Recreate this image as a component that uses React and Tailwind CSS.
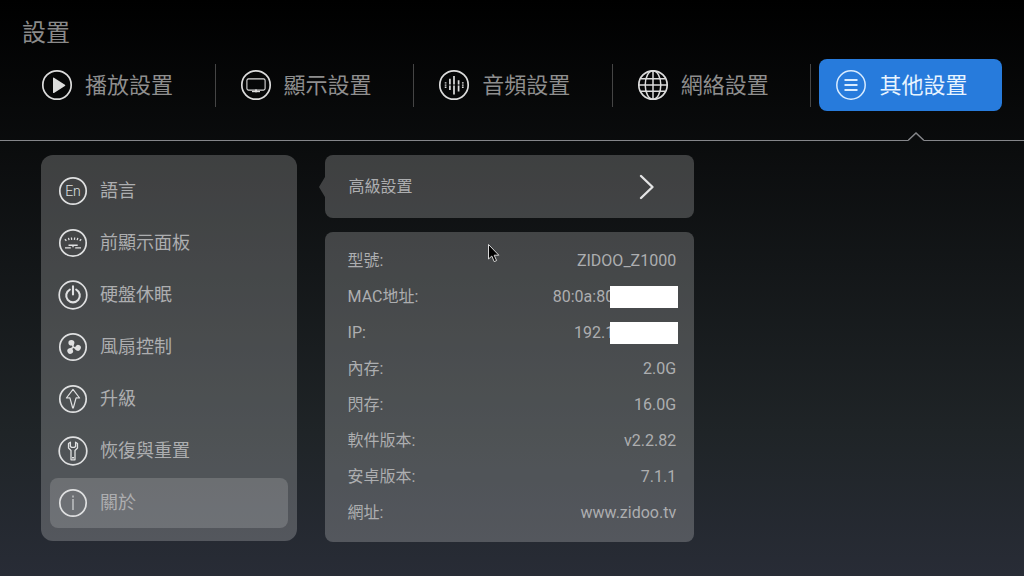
import React, { useState } from "react";

const ring = { fill: "none", stroke: "currentColor", strokeWidth: 1.7 };

const PlayIcon = () => (
  <svg className="size-8 shrink-0" viewBox="0 0 32 32">
    <circle cx="16" cy="16" r="14.2" {...ring} />
    <path d="M12 9.2v14.2c0 .6.5.8 1 .5l10.9-7c.5-.3.5-.8 0-1.2l-10.9-7c-.5-.3-1-.1-1 .5z" fill="currentColor" />
  </svg>
);

const ScreenIcon = () => (
  <svg className="size-8 shrink-0" viewBox="0 0 32 32">
    <circle cx="16" cy="16" r="14.2" {...ring} />
    <rect x="6.9" y="9.9" width="18.2" height="11.2" rx="1.6" {...ring} strokeWidth="1.1" />
    <path d="M12 22.6h8" {...ring} strokeWidth="1.2" />
    <path d="M15 20.6h2v2.6h-2z" fill="currentColor" />
  </svg>
);

const AudioIcon = () => (
  <svg className="size-8 shrink-0" viewBox="0 0 32 32">
    <circle cx="16" cy="16" r="14.2" {...ring} />
    <path d="M16 7v8.6M16 16.4v9M11.9 9.7v5.9M11.9 16.4v4.6M20.6 11.3v4.3M20.6 16.4v6.2" {...ring} />
    <path d="M7.6 13.2v1.4M7.6 15.4v1.4M7.6 17.6v1.4M24.8 13.2v1.4M24.8 15.4v1.4M24.8 17.6v1.4" {...ring} />
  </svg>
);

const GlobeIcon = () => (
  <svg className="size-8 shrink-0" viewBox="0 0 32 32">
    <circle cx="16" cy="16" r="14.2" {...ring} />
    <ellipse cx="16" cy="16" rx="7.8" ry="14.2" {...ring} strokeWidth="1.5" />
    <path d="M16 2v28M2 16h28M4 9.8h24M4 22.2h24" {...ring} strokeWidth="1.5" />
  </svg>
);

const ListIcon = () => (
  <svg className="size-8 shrink-0" viewBox="0 0 32 32">
    <circle cx="16" cy="16" r="14.2" {...ring} strokeWidth="1.5" />
    <path d="M9.5 11h13M9.5 16h13M9.5 21h13" {...ring} strokeWidth="2.2" />
  </svg>
);

const LanguageIcon = () => (
  <svg className="size-[30px] shrink-0" viewBox="0 0 30 30">
    <circle cx="15" cy="15" r="13.2" {...ring} />
    <text x="15" y="20" textAnchor="middle" fontSize="14" fontWeight="300" fill="currentColor">
      En
    </text>
  </svg>
);

const PanelIcon = () => (
  <svg className="size-[30px] shrink-0" viewBox="0 0 30 30">
    <circle cx="15" cy="15" r="13.2" {...ring} />
    <path d="M6.9 11.2l1.5 1.6M10.4 9.9l.7 2.2M13.4 9.5l.3 2.4M16.7 9.5l-.3 2.4M19.9 9.9l-.8 2.2M23.2 11.2l-1.5 1.6" {...ring} strokeWidth="1.3" />
    <path d="M10.5 17.3h9.2M15 17.3v2M7 19.9h5.8M17.2 19.9H23" {...ring} strokeWidth="1.4" />
  </svg>
);

const PowerIcon = () => (
  <svg className="size-[30px] shrink-0" viewBox="0 0 30 30">
    <circle cx="15" cy="15" r="13.8" {...ring} />
    <path d="M11.8 9.6a6.8 6.8 0 1 0 6.4 0M15 6.4v8" {...ring} strokeWidth="2.1" strokeLinecap="round" />
  </svg>
);

const FanIcon = () => (
  <svg className="size-[30px] shrink-0" viewBox="0 0 30 30">
    <circle cx="15" cy="15" r="13.2" {...ring} />
    <g fill="currentColor">
      {[0, 120, 240].map((angle) => (
        <g key={angle} transform={`rotate(${angle} 15.2 15.2)`}>
          <ellipse cx="13.4" cy="10.7" rx="3" ry="2.8" />
          <path d="M15.9 11.5l-.3 3.7h-.8l-1.300-2.500z" />
        </g>
      ))}
      <circle cx="15.2" cy="15.2" r="1" />
    </g>
  </svg>
);

const UpgradeIcon = () => (
  <svg className="size-[30px] shrink-0" viewBox="0 0 30 30">
    <circle cx="15" cy="15" r="13.2" {...ring} />
    <path d="M15 5.4l6.6 8.6-3.5-.2L15.3 24h-.6l-2.8-10.2-3.5.2z" {...ring} strokeWidth="1.2" strokeLinejoin="round" />
  </svg>
);

const WrenchIcon = () => (
  <svg className="size-[30px] shrink-0" viewBox="0 0 30 30">
    <circle cx="15" cy="15" r="13.8" {...ring} />
    <path d="M12.4 6.2l-1.9 1.3v4.5l2.5 2.5v9.3h4v-9.3l2.5-2.5V7.5l-1.9-1.3v4.3l-1.3.9h-2.6l-1.3-.9z" {...ring} strokeWidth="1.3" strokeLinejoin="round" />
    <path d="M14 21.8h2" {...ring} strokeWidth="1.4" />
  </svg>
);

const InfoIcon = () => (
  <svg className="size-[30px] shrink-0" viewBox="0 0 30 30">
    <circle cx="15" cy="15" r="13.2" {...ring} />
    <path d="M15 7.6v1.8M15 11v11" {...ring} strokeWidth="1.1" />
  </svg>
);

const tabs = [
  { label: "播放設置", Icon: PlayIcon },
  { label: "顯示設置", Icon: ScreenIcon },
  { label: "音頻設置", Icon: AudioIcon },
  { label: "網絡設置", Icon: GlobeIcon },
  { label: "其他設置", Icon: ListIcon },
];

const sections = [
  { label: "語言", Icon: LanguageIcon },
  { label: "前顯示面板", Icon: PanelIcon },
  { label: "硬盤休眠", Icon: PowerIcon },
  { label: "風扇控制", Icon: FanIcon },
  { label: "升級", Icon: UpgradeIcon },
  { label: "恢復與重置", Icon: WrenchIcon },
  { label: "關於", Icon: InfoIcon },
];

const details = [
  { name: "型號:", value: "ZIDOO_Z1000" },
  { name: "MAC地址:", value: "80:0a:80", hidden: true },
  { name: "IP:", value: "192.1", hidden: true },
  { name: "內存:", value: "2.0G" },
  { name: "閃存:", value: "16.0G" },
  { name: "軟件版本:", value: "v2.2.82" },
  { name: "安卓版本:", value: "7.1.1" },
  { name: "網址:", value: "www.zidoo.tv" },
];

export default function App() {
  const [tab, setTab] = useState(4);
  const [section, setSection] = useState(6);

  return (
    <div className="relative min-h-screen bg-linear-to-b/srgb from-black via-[#1f2427] via-75% to-[#282c36] pb-8 font-[Roboto,'Noto_Sans_CJK_TC',sans-serif] text-[#adaeb0]">
      <h1 className="px-[22px] pt-[17px] text-2xl leading-8 font-normal text-[#8a8a8a]">設置</h1>

      <nav className="mt-2.5 mr-3.5 ml-[17px] grid grid-cols-5">
        {tabs.map(({ label, Icon }, i) => (
          <div key={label} className="flex items-center">
            <button
              type="button"
              onClick={() => setTab(i)}
              className={
                i === tab
                  ? "mx-2 flex h-[52px] flex-1 items-center gap-3 rounded-lg bg-[#277bdc] px-4 text-[22px] whitespace-nowrap text-[#e8f4ff]"
                  : "mx-2 flex h-[52px] flex-1 items-center gap-3 rounded-lg px-4 text-[22px] whitespace-nowrap text-[#8e8e8e]"
              }
            >
              <span className={i === tab ? "text-[#d9ecff]" : "text-[#dcdcdc]"}>
                <Icon />
              </span>
              {label}
            </button>
            {i < tabs.length - 1 && <span className="h-[43px] w-px bg-[#454545]" />}
          </div>
        ))}
      </nav>

      <div className="mt-[21px] flex items-end text-[#85868a]">
        <span className="mb-px h-px flex-1 bg-current" />
        <svg className="h-2.5 w-4" viewBox="0 0 16 10">
          <path d="M0 8.5L8 1l8 7.5" fill="none" stroke="currentColor" strokeWidth="1.5" />
        </svg>
        <span className="mb-px h-px w-[100px] bg-current" />
      </div>

      <main className="mt-[13px] ml-[4%] flex items-start gap-7">
        <ul className="flex w-[26%] flex-col gap-0.5 rounded-xl bg-white/21 px-[9px] pt-[11px] pb-[13px]">
          {sections.map(({ label, Icon }, i) => (
            <li key={label}>
              <button
                type="button"
                onClick={() => setSection(i)}
                className={
                  i === section
                    ? "flex h-[50px] w-full items-center gap-3 rounded-lg bg-white/16 px-2 text-lg"
                    : "flex h-[50px] w-full items-center gap-3 rounded-lg px-2 text-lg"
                }
              >
                <span className="text-[#dfe0e1]">
                  <Icon />
                </span>
                {label}
              </button>
            </li>
          ))}
        </ul>

        <div className="flex w-[37.6%] flex-col gap-3.5">
          <button type="button" className="relative flex h-[63px] items-center justify-between rounded-lg bg-white/21 pr-[39px] pl-6 text-base">
            <svg className="absolute top-[22px] right-full h-5 w-1.5 text-white/21" viewBox="0 0 6 20">
              <path d="M6 0L0 10l6 10z" fill="currentColor" />
            </svg>
            高級設置
            <svg className="h-[26px] w-4 text-[#e4e4e5]" viewBox="0 0 16 26">
              <path d="M2 2l11.5 11L2 24" fill="none" stroke="currentColor" strokeWidth="2.4" strokeLinecap="round" strokeLinejoin="round" />
            </svg>
          </button>

          <dl className="rounded-lg bg-white/21 py-[11px] pr-[18px] pl-[23px] text-base">
            {details.map(({ name, value, hidden }) => (
              <div key={name} className="flex h-9 items-center justify-between">
                <dt>{name}</dt>
                <dd className="flex items-center">
                  {value}
                  {hidden && <span className="relative -mr-0.5 -ml-1 h-[22px] w-[68px] bg-white" />}
                </dd>
              </div>
            ))}
          </dl>
        </div>
      </main>

      {/* mouse pointer */}
      <svg className="pointer-events-none absolute top-[243px] left-[487px] h-5 w-3.5" viewBox="0 0 14 20">
        <path d="M1.5 1.5v14.5l3.3-3 2.4 5.6 2.4-1-2.4-5.4h4.6z" fill="#000" stroke="#d8d8d8" strokeWidth="1" />
      </svg>
    </div>
  );
}
